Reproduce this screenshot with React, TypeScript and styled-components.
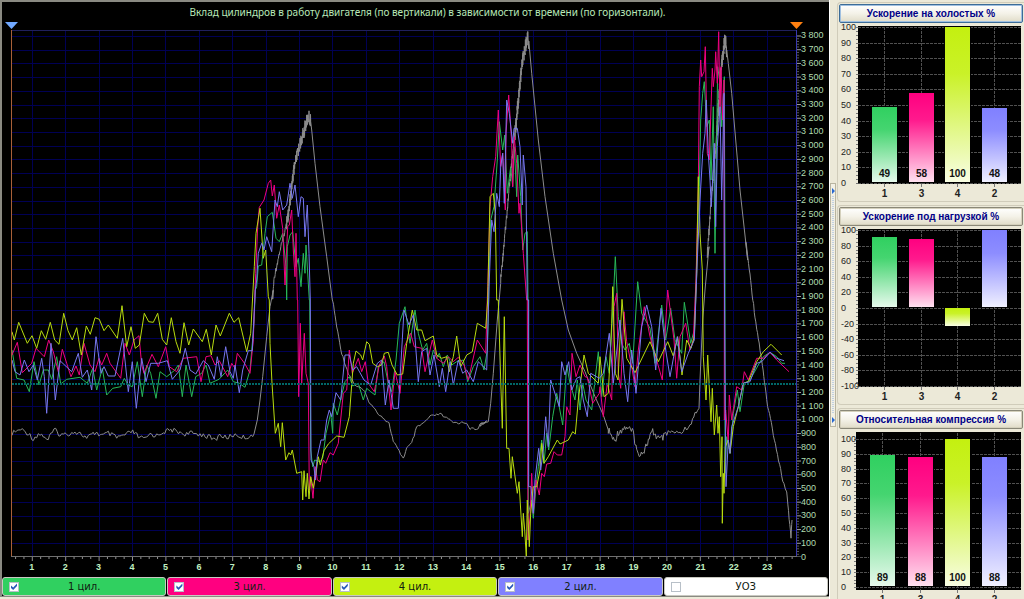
import React from 'react';
import styled, { createGlobalStyle } from 'styled-components';

const GlobalStyle = createGlobalStyle`
  * { box-sizing: border-box; }
  body { margin: 0; background: #ece9d8; font-family: "Liberation Sans", Arial, sans-serif; }
`;

const colors = {
  green: '#30d060',
  pink: '#ff0080',
  yellow: '#c4f010',
  blue: '#8080ff',
  grey: '#808080',
};

/* ---------- layout ---------- */

const Page = styled.div`
  display: flex;
  height: 100vh;
  overflow: hidden;
`;

const Main = styled.main`
  flex: 1;
  min-width: 0;
  display: flex;
  flex-direction: column;
`;

const ChartArea = styled.section`
  flex: 1;
  min-height: 0;
  display: flex;
  flex-direction: column;
  background: #000;
  border-top: 2px solid #8a8a82;
  border-left: 2px solid #8a8a82;
`;

const ChartTitle = styled.h1`
  margin: 0;
  padding-left: 24px;
  height: 20px;
  text-align: center;
  white-space: nowrap;
  font: 400 10px/20px "Noto Sans", Verdana, sans-serif;
  color: #b8e8b8;
`;

const Markers = styled.div`
  display: flex;
  justify-content: space-between;
  height: 8px;
  padding: 0 26px 0 3px;
`;

const Marker = styled.span<{ $color: string }>`
  width: 13px;
  height: 7px;
  background: ${(p) => p.$color};
  clip-path: polygon(0 0, 100% 0, 50% 100%);
`;

const PlotRow = styled.div`
  flex: 1;
  min-height: 0;
  display: flex;
  padding-left: 9px;
`;

const Plot = styled.svg`
  flex: 1;
  width: 0;
  min-width: 0;
  display: block;
`;

const AxisTicks = styled.svg`
  flex: none;
  width: 4px;
  display: block;
`;

const ValueLabels = styled.ol`
  flex: none;
  width: 28px;
  margin: -1px 0 -7px;
  padding: 0;
  list-style: none;
  display: grid;
  grid-auto-rows: 1fr;
  align-items: center;
  font-size: 9px;
  line-height: 13px;
  color: #b0dcb0;
  white-space: nowrap;
`;

const TimeTicks = styled.svg`
  display: block;
  width: calc(100% - 41px);
  height: 4px;
  margin-left: 9px;
`;

const TimeLabels = styled.ol`
  margin: 0;
  padding: 0 45px 0 13px;
  list-style: none;
  display: grid;
  grid-auto-flow: column;
  grid-auto-columns: 1fr;
  height: 16px;
  text-align: center;
  font: 700 9px/12px "Liberation Sans", Arial, sans-serif;
  color: #c0f0c0;
`;

const Legend = styled.div`
  display: grid;
  grid-template-columns: repeat(5, 1fr);
  gap: 1px;
  padding-right: 1px;
`;

const LegendItem = styled.label<{ $color: string }>`
  display: flex;
  align-items: center;
  height: 19px;
  padding: 0 6px;
  border: 1px solid #c8c8c0;
  border-radius: 3px;
  background: ${(p) => p.$color};
  font: 400 10px/16px "DejaVu Sans", Verdana, sans-serif;
  color: #102010;
`;

const LegendCheck = styled.input`
  appearance: none;
  margin: 0;
  width: 10px;
  height: 10px;
  flex: none;
  background: #fff;
  outline: 1px solid #b8c0c8;
  outline-offset: -1px;
  &:checked::before {
    content: '';
    display: block;
    width: 10px;
    height: 10px;
    background: #2858b8;
    clip-path: polygon(20% 40%, 42% 60%, 80% 20%, 80% 45%, 42% 85%, 20% 65%);
  }
`;

const LegendText = styled.span`
  flex: 1;
  text-align: center;
  padding-right: 10px;
`;

const StatusStrip = styled.div`
  height: 3px;
  background: #ece9d8;
  border-top: 1px solid #8a8a82;
`;

const Splitter = styled.div`
  flex: none;
  width: 8px;
  display: flex;
  flex-direction: column;
  padding-top: 183px;
  background: #ece9d8;
  border-left: 1px solid #fff;
`;

const SplitterHandle = styled.button`
  width: 6px;
  height: 244px;
  padding: 0;
  border: 1px solid #b8b4a0;
  background: #f2f0e4;
  display: flex;
  justify-content: center;
`;

const Side = styled.aside`
  flex: none;
  width: 187px;
  display: flex;
  flex-direction: column;
  gap: 3px;
  padding-top: 2px;
`;

const Card = styled.section`
  flex: none;
  height: 200px;
  padding: 1px 0 0 1px;
  border: 1px solid #d0ccba;
  border-right: 0;
  border-radius: 4px 0 0 4px;
`;

const CardButton = styled.button<{ $active?: boolean }>`
  display: block;
  width: 184px;
  height: 19px;
  padding: 0;
  border: 1px solid ${(p) => (p.$active ? '#3c6c98' : '#8a8878')};
  border-radius: 2px;
  box-shadow: inset 0 0 0 1px ${(p) => (p.$active ? '#a0c0e0' : '#d4d0bc')};
  background: linear-gradient(#ffffff, #f4f2e8 50%, #e0dcc8);
  font: 700 10px/15px "Liberation Sans", Arial, sans-serif;
  color: #000088;
  white-space: nowrap;
`;

const MiniSvg = styled.svg`
  display: block;
  width: 184px;
  height: 178px;
  font-family: "Liberation Sans", Arial, sans-serif;
`;

/* ---------- trace data ---------- */

type Pt = [number, number];

/* Samples are stored at a third of a plot unit, relative to the origin of their segment. */
const seg = (ox: number, oy: number, data: string): Pt[] =>
  data.split(' ').map((pair) => {
    const [x, y] = pair.split(',').map(Number);
    return [ox + x / 3, oy + y / 3];
  });

/* Adds sensor ripple to a smooth curve. */
const ripple = (pts: Pt[], amp: number, step = 1.6): Pt[] => {
  const out: Pt[] = [];
  let n = 0;
  for (let i = 0; i < pts.length - 1; i++) {
    const [x0, y0] = pts[i];
    const [x1, y1] = pts[i + 1];
    const count = Math.max(1, Math.round(Math.hypot(x1 - x0, (y1 - y0) / 4) / step));
    for (let k = 0; k < count; k++) {
      const t = k / count;
      n += 1;
      const r = Math.sin(n * 12.9898) * 43758.5453;
      out.push([x0 + (x1 - x0) * t, y0 + (y1 - y0) * t + (r - Math.floor(r) - 0.5) * 2 * amp]);
    }
  }
  out.push(pts[pts.length - 1]);
  return out;
};

const toPoints = (pts: Pt[]) => pts.map(([x, y]) => `${x.toFixed(1)},${y.toFixed(1)}`).join(' ');

const yellowTrace = [
  ...seg(0, 290, '36,125 43,150 56,97 82,160 96,137 110,175 124,122 137,148 151,97 164,150 177,163 191,70 204,122 217,150 230,113 244,195 259,108 271,133 285,83 298,88 312,122 325,105 352,145 366,47 380,170 393,110 406,175 418,165 433,70 446,95 460,97 473,70 487,148 500,165 514,83 528,155 540,190 552,98 566,165 580,117 607,155 619,118 634,195 648,105 661,138 688,70 702,97 716,83 740,185 752,130 759,0'),
  ...seg(240, 100, '43,500 48,400 60,325 70,475 77,450 85,590'),
  ...seg(240, 300, '88,0 90,130 96,250 106,400 115,370 122,440 127,368 137,480 147,458 152,465 157,450 170,520 185,515 188,600 192,512 198,590 202,520 207,597 212,530 220,565 228,520 235,470 241,495 252,452 265,432 290,408 312,412 328,350 340,190 348,153 362,165 368,180 380,125 388,133 398,190 412,200 425,195 433,160 445,157 456,195 472,225 488,222 500,130 517,30 530,90 545,90 555,122 580,108 590,165 605,175 620,170 628,215 640,170 650,108 662,200 680,165 697,155 712,70 737,85 743,0'),
  ...seg(470, 20, '54,800 60,530 70,520 76,580 80,840'),
  ...seg(470, 300, '85,0 92,240 97,385 103,50 110,445 117,445 123,535 127,470 142,580 147,545 157,710 160,640 164,690 169,770 172,600 178,740 182,640 190,560 200,560 210,510 215,430 222,490 235,470 262,420 270,432 295,420 308,395 316,402 325,300 342,165 355,220 385,250'),
  ...seg(600, 240, '0,350 12,470 25,460 35,250 38,140 46,400 54,420 66,178 80,355 105,398 150,305 175,365 203,305 220,348 233,290 246,405 260,300 273,325 283,290 290,100'),
  ...seg(670, 20, '82,640 85,470 90,640 95,720'),
  ...seg(600, 240, '307,90 310,350 318,480 323,345 333,545 337,445 343,585 350,495 354,580 358,530 362,710 366,590 367,850 370,700 372,760 376,620 385,600 390,640 400,560 415,500 430,430 445,425 470,365 490,335 513,313 545,345'),
];

const pinkTrace = [
  ...seg(0, 290, '36,195 52,157 67,248 95,220 108,175 133,200 146,150 160,185 175,245 187,178 200,220 213,260 228,228 238,255 252,160 270,225 285,245 297,205 305,225 320,190 330,220 362,265 375,160 388,195 402,150 417,137 425,225 432,250 456,193 475,230 497,170 508,230 530,245 550,205 590,200 603,275 618,200 633,197 645,225 658,212 683,260 695,220 705,235 712,190 735,222 750,250 760,150 765,0'),
  ...seg(240, 100, '47,520 53,380 58,322 72,300 85,250 92,240 97,288 103,255 110,355 118,315 128,385 135,555 143,380 148,375 155,330 160,450 165,530 168,400 172,600'),
  ...seg(240, 300, '173,0 176,290 181,70 185,250 193,100 198,220 205,250 208,570 212,530 219,595 226,500 232,540 240,545 250,480 257,490 270,458 280,465 295,430 310,280 320,270 328,150 337,220 355,175 365,215 376,185 385,250 403,275 418,195 433,168 440,200 453,330 465,215 480,280 493,140 512,100 523,140 545,145 555,215 577,120 590,175 610,190 625,170 640,185 655,172 672,195 685,240 712,120 737,160 742,0'),
  ...seg(470, 20, '54,780 60,560 68,470 77,410 85,270 92,440 98,400 106,570 108,340 116,225 125,370 128,500 133,350 140,430 147,580 150,550 160,700 170,840'),
  ...seg(470, 300, '172,0 174,720 180,650 185,520 190,640 198,540 208,585 215,520 223,530 230,492 242,490 252,455 262,465 275,465 285,410 290,320 300,345 306,160 318,230 330,195 345,230 352,232 368,310 388,280'),
  ...seg(600, 240, '0,440 10,530 22,430 35,480 42,200 50,160 55,400 62,445 72,215 80,305 95,380 105,440 115,330 133,200 150,290 187,420 203,150 222,300 230,415 240,290 257,250 270,330 280,300 288,120'),
  ...seg(670, 20, '85,500 88,200 92,120 95,170 102,155 106,80 112,400 118,420 127,145 130,200 135,150 137,95 142,190 146,35 150,280 153,140 158,300 162,180 163,720'),
  ...seg(600, 240, '373,540 377,510 385,610 388,465 395,540 410,440 425,450 433,395 445,420 470,355 490,355 510,337 530,360 567,395'),
];

const greenTrace = [
  ...seg(0, 290, '36,180 50,265 72,270 88,305 102,215 117,285 130,240 145,240 155,268 170,200 182,282 200,268 240,262 262,280 278,235 290,300 307,235 320,315 338,295 362,290 373,265 385,285 397,290 412,215 427,320 440,225 452,250 468,325 480,245 500,260 525,240 535,225 547,320 558,225 575,320 587,260 605,250 618,225 630,280 657,268 683,240 700,275 718,280 735,292 750,240 762,100 766,0'),
  ...seg(240, 100, '50,560 55,498 65,495 75,400 82,350 97,337 108,415 118,425 128,400 138,500 140,600 142,440 150,405 158,395 168,500 175,475 183,560 190,460 195,520 198,435 208,600'),
  ...seg(240, 300, '209,0 212,450 218,500 224,480 240,485 248,475 258,400 272,340 278,400 280,310 292,345 305,285 315,245 328,230 338,258 355,250 370,300 380,265 392,275 405,285 415,200 432,185 445,250 455,275 468,180 478,70 495,20 510,130 525,30 535,100 548,150 560,130 570,195 580,150 590,175 598,160 610,200 622,165 635,195 650,185 670,180 683,245 700,200 720,170 732,210 742,150 746,0'),
  ...seg(470, 20, '56,800 62,600 72,560 82,420 88,305 98,390 104,345 112,520 122,440 128,500 133,380 140,530 143,405 152,530 158,690 165,640 172,635 174,840'),
  ...seg(470, 300, '175,0 175,640 185,600 190,655 198,560 205,500 215,420 222,490 230,400 236,450 248,350 260,280 278,375 290,195 300,250 315,300 322,240 330,330 338,250 348,300 365,330 375,240 385,155'),
  ...seg(600, 240, '5,470 18,350 28,400 40,180 46,50 55,230 65,310 75,330 88,310 98,370 113,125 125,220 150,265 165,370 185,195 197,300 212,205 225,300 245,340 253,187 272,310 283,270 290,60'),
  ...seg(670, 20, '88,500 92,300 98,220 103,185 110,320 118,300 123,480 130,260 135,700 143,140 150,190 155,320 163,170 165,720'),
  ...seg(600, 240, '375,700 380,590 390,640 400,520 412,450 420,515 433,430 450,420 475,375 490,350 510,337 530,350 545,370 555,370'),
];

const blueTrace = [
  ...seg(0, 290, '36,210 45,245 60,255 73,210 87,245 100,225 112,270 125,205 133,260 140,370 153,160 166,330 180,212 215,245 235,190 247,262 262,240 275,300 288,140 303,250 312,230 325,258 345,258 368,145 385,305 397,215 409,355 425,205 438,275 452,220 475,220 502,212 517,268 540,240 556,175 570,240 587,252 610,212 625,225 643,268 652,200 663,260 677,170 690,245 700,265 705,225 718,308 728,240 745,182 757,182 766,0'),
  ...seg(240, 100, '50,540 55,460 65,430 72,450 80,410 95,455 105,300 112,320 118,275 128,330 140,315 150,250 157,295 165,255 175,350 183,290 190,295 195,410 202,315 207,460 211,600'),
  ...seg(240, 300, '211,0 213,480 222,500 226,540 232,470 243,420 252,420 260,360 268,330 275,350 288,278 302,300 315,165 328,165 338,210 350,200 372,240 392,255 412,190 425,180 436,315 447,240 460,325 475,325 492,30 507,75 520,45 535,245 545,155 560,145 570,225 582,165 598,260 607,205 617,275 630,185 640,255 655,180 668,220 680,210 700,245 715,185 740,210 746,0'),
  ...seg(470, 20, '58,780 65,600 72,635 80,520 88,560 92,440 98,400 103,550 110,240 118,280 128,370 132,325 142,325 150,380 157,555 160,405 168,500 172,840'),
  ...seg(470, 300, '176,0 176,560 183,560 190,640 195,540 206,445 212,510 220,450 227,350 235,440 242,240 258,290 268,320 275,185 285,225 296,185 305,270 320,235 330,230 340,300 352,350 362,220 388,235'),
  ...seg(600, 240, '10,400 28,280 40,430 60,240 72,400 83,485 95,330 108,460 125,260 140,195 155,260 167,390 183,205 197,330 210,410 232,290 245,395 265,340 283,300 292,60'),
  ...seg(670, 20, '90,540 98,400 105,340 109,240 115,400 120,480 124,560 133,370 137,620 142,380 150,260 155,540 162,220 163,720'),
  ...seg(600, 240, '376,520 378,740 385,600 390,640 395,560 415,500 430,430 450,425 470,370 485,365 510,337 530,355 552,362'),
];

const ignitionTrace = [
  ...ripple(seg(0, 290, '36,430 62,418 85,430 100,447 115,432 130,437 145,450 152,432 167,420 180,435 200,432 225,425 245,433 260,445 275,435 288,427 305,437 325,430 350,443 375,435 398,425 415,440 435,448 450,432 470,437 490,425 517,420 540,427 555,432 575,430 605,433 625,440 645,450 660,434 680,445 695,435 715,437 735,443 750,437 762,432'), 2.5),
  ...seg(0, 290, '762,432 772,390 780,330 788,260 800,140 810,50 820,0'),
  ...ripple(seg(240, 100, '98,590 103,530 118,460 140,370'), 3, 0.7),
  ...ripple(seg(240, 100, '140,370 148,320 160,220 175,150 190,100 200,65 207,50 212,65'), 7, 0.25),
  ...seg(240, 100, '215,90 225,190 240,320 260,470 277,600'),
  ...ripple(seg(240, 300, '278,0 290,80 305,160 325,220 345,255 370,270 390,310 410,335 447,370 460,425 490,475 500,445 515,430 530,383 550,370 570,350 600,342 620,355 640,368 680,368 690,385 710,390 720,375 740,362'), 1.3),
  ...ripple(seg(470, 300, '30,375 40,372 55,365'), 1.6),
  ...seg(470, 300, '62,310 70,220 82,60'),
  ...ripple(seg(470, 20, '92,780 105,640 120,480 135,340'), 4, 0.5),
  ...ripple(seg(470, 20, '135,340 150,190 160,110 172,52 177,70'), 8, 0.25),
  ...seg(470, 20, '185,160 205,360 225,530 250,700 275,840'),
  ...seg(470, 300, '275,0 295,90 320,160 345,215 375,290 400,345 415,390'),
  ...ripple(seg(470, 300, '415,390 433,425 445,395 470,380 490,400 502,460 520,455 548,395 570,420 590,405'), 4, 1),
  ...ripple(seg(600, 240, '200,580 215,575 235,580 250,570 270,555 285,520 297,505'), 2.5),
  ...seg(600, 240, '300,420 308,240 315,150 327,20'),
  ...ripple(seg(670, 20, '112,700 125,520 140,350'), 5, 0.5),
  ...ripple(seg(670, 20, '140,350 150,180 165,54 170,90'), 8, 0.25),
  ...seg(670, 20, '175,130 185,220 210,510 233,720'),
  ...ripple(seg(600, 240, '437,0 465,230 485,360 500,480 520,580 548,720 560,760 573,890 576,840'), 2),
];

/* ---------- main chart ---------- */

const yAt = (v: number) => 557 - (v * 521) / 3800;
const xAt = (t: number) => 32.3 + (t - 1) * 33.4;
const formatValue = (v: number) => (v >= 1000 ? `${Math.floor(v / 1000)} ${String(v % 1000).padStart(3, '0')}` : String(v));
const values = Array.from({ length: 39 }, (_, i) => 3800 - i * 100);
const times = Array.from({ length: 23 }, (_, i) => i + 1);

const traces: [string, Pt[]][] = [
  ['#8c8c8c', ignitionTrace],
  ['#28b858', greenTrace],
  ['#f00080', pinkTrace],
  ['#b8dc10', yellowTrace],
  ['#7878f0', blueTrace],
];

function MainPlot() {
  return (
    <Plot viewBox="11 30 786 527" preserveAspectRatio="none" role="img" aria-label="Вклад цилиндров">
      <g fill="#000054">
        {values.map((v) => (
          <rect key={v} x="12" width="784" y={Math.round(yAt(v))} height="1" />
        ))}
        {times.map((t) => (
          <rect key={t} y="30" height="527" x={Math.floor(xAt(t))} width="1" />
        ))}
      </g>
      {traces.map(([color, pts]) => (
        <polyline key={color} points={toPoints(pts)} fill="none" stroke={color} strokeWidth="1" strokeLinejoin="bevel" />
      ))}
      <line x1="12" x2="796" y1="384" y2="384" stroke="#006868" strokeWidth="2" strokeDasharray="2 1" />
      <line x1="12" x2="796" y1="30.5" y2="30.5" stroke="#20205c" />
      <line x1="796.5" x2="796.5" y1="30" y2="557" stroke="#3838b0" />
      <line x1="11.5" x2="11.5" y1="30" y2="557" stroke="#a86038" />
      <line x1="11" x2="797" y1="556.5" y2="556.5" stroke="#707070" />
    </Plot>
  );
}

function ValueTicks() {
  const ticks = Array.from({ length: 191 }, (_, i) => i * 20);
  return (
    <AxisTicks viewBox="0 30 4 527" preserveAspectRatio="none" aria-hidden="true">
      {ticks.map((v) => (
        <line key={v} x1="0" x2={v % 100 ? 2 : 4} y1={yAt(v)} y2={yAt(v)} stroke={v % 100 ? '#585858' : '#a0a0a0'} />
      ))}
    </AxisTicks>
  );
}

const legend = [
  { label: '1 цил.', color: colors.green, on: true },
  { label: '3 цил.', color: colors.pink, on: true },
  { label: '4 цил.', color: colors.yellow, on: true },
  { label: '2 цил.', color: colors.blue, on: true },
  { label: 'УОЗ', color: '#ffffff', on: false },
];

/* ---------- side charts ---------- */

interface MiniProps {
  id: string;
  left: number;
  max: number;
  min: number;
  step: number;
  top: number;
  bottom: number;
  barX: number[];
  data: number[];
  showValues?: boolean;
}

const cylinders = ['1', '3', '4', '2'];
const barColors = [colors.green, colors.pink, colors.yellow, colors.blue];

function MiniChart({ id, left, max, min, step, top, bottom, barX, data, showValues }: MiniProps) {
  const y = (v: number) => Math.round(bottom - ((v - min) * (bottom - top)) / (max - min));
  const ticks = Array.from({ length: (max - min) / step + 1 }, (_, i) => min + i * step);
  const minor = Array.from({ length: ticks.length * 4 - 3 }, (_, i) => min + (i * step) / 4);
  return (
    <MiniSvg viewBox="0 0 184 178" role="img" aria-label={id}>
      <defs>
        {barColors.map((c, i) => (
          <linearGradient key={c} id={`${id}-${i}`} x1="0" y1="0" x2="0" y2="1">
            <stop offset="0" stopColor={c} />
            <stop offset="0.3" stopColor={c} stopOpacity="0.9" />
            <stop offset="1" stopColor={c} stopOpacity="0.12" />
          </linearGradient>
        ))}
      </defs>
      <rect x={left} y="3" width={182 - left} height="158" fill="#000" />
      <g stroke="#505050" strokeDasharray="3 1">
        {ticks.map((t) => (
          <line key={t} x1={left} x2="182" y1={y(t) + 0.5} y2={y(t) + 0.5} />
        ))}
        {barX.map((x) => (
          <line key={x} x1={x + 12.5} x2={x + 12.5} y1="4" y2="161" />
        ))}
      </g>
      <g stroke="#777">
        {minor.map((t) => (
          <line key={t} x1={left - 2} x2={left} y1={y(t) + 0.5} y2={y(t) + 0.5} />
        ))}
        {barX.map((x) => (
          <line key={x} x1={x + 12.5} x2={x + 12.5} y1="161" y2="164" />
        ))}
      </g>
      {ticks.map((t) => (
        <text key={t} x="2" y={y(t) + 3} fontSize="9" fill="#222">{t}</text>
      ))}
      {data.map((v, i) => {
        const a = y(Math.max(v, 0));
        const b = y(Math.min(v, 0)) - (v > 0 ? 1 : 0);
        return (
          <g key={barX[i]}>
            <rect x={barX[i] - 1} y={a} width="27" height={b - a} fill="#000" />
            <rect x={barX[i]} y={a} width="25" height={b - a} fill="#fff" />
            <rect x={barX[i]} y={a} width="25" height={b - a} fill={`url(#${id}-${i})`} />
            {showValues && (
              <text x={barX[i] + 12.5} y={bottom - 6} fontSize="10" fontWeight="700" textAnchor="middle" fill="#111">{v}</text>
            )}
            <text x={barX[i] + 12.5} y="174" fontSize="10" fontWeight="700" textAnchor="middle" fill="#222">{cylinders[i]}</text>
          </g>
        );
      })}
    </MiniSvg>
  );
}

export default function App() {
  return (
    <Page>
      <GlobalStyle />
      <Main>
        <ChartArea>
          <ChartTitle>Вклад цилиндров в работу двигателя (по вертикали) в зависимости от времени (по горизонтали).</ChartTitle>
          <Markers>
            <Marker $color="#70a8ff" />
            <Marker $color="#ff8010" />
          </Markers>
          <PlotRow>
            <MainPlot />
            <ValueTicks />
            <ValueLabels>
              {values.map((v) => <li key={v}>{formatValue(v)}</li>)}
            </ValueLabels>
          </PlotRow>
          <TimeTicks viewBox="11 0 786 4" preserveAspectRatio="none" aria-hidden="true">
            {Array.from({ length: 95 }, (_, i) => i - 2).map((i) => (
              <line key={i} x1={xAt(1 + i / 4)} x2={xAt(1 + i / 4)} y1="0" y2={i % 4 ? 2 : 4} stroke="#909090" />
            ))}
          </TimeTicks>
          <TimeLabels>
            {times.map((t) => <li key={t}>{t}</li>)}
          </TimeLabels>
          <Legend>
            {legend.map((item) => (
              <LegendItem key={item.label} $color={item.color}>
                <LegendCheck type="checkbox" defaultChecked={item.on} />
                <LegendText>{item.label}</LegendText>
              </LegendItem>
            ))}
          </Legend>
        </ChartArea>
        <StatusStrip />
      </Main>
      <Splitter>
        <SplitterHandle aria-label="Свернуть панель">
          <svg width="4" height="242" aria-hidden="true">
            <line x1="2" x2="2" y1="12" y2="230" stroke="#90b0e0" strokeWidth="1" strokeDasharray="1 1" />
            <path d="M1 4l3 3l-3 3zM1 233l3 3l-3 3z" fill="#2868d0" />
          </svg>
        </SplitterHandle>
      </Splitter>
      <Side>
        <Card>
          <CardButton $active>Ускорение на холостых %</CardButton>
          <MiniChart id="idle" left={19} min={0} max={100} step={10} top={4} bottom={160} barX={[33, 70, 106, 143]} data={[49, 58, 100, 48]} showValues />
        </Card>
        <Card>
          <CardButton>Ускорение под нагрузкой %</CardButton>
          <MiniChart id="load" left={19} min={-100} max={100} step={20} top={4} bottom={160} barX={[33, 70, 106, 143]} data={[91, 89, -23, 100]} />
        </Card>
        <Card>
          <CardButton>Относительная компрессия %</CardButton>
          <MiniChart id="compression" left={17} min={0} max={100} step={10} top={10} bottom={158} barX={[31, 69, 106, 143]} data={[89, 88, 100, 88]} showValues />
        </Card>
      </Side>
    </Page>
  );
}
